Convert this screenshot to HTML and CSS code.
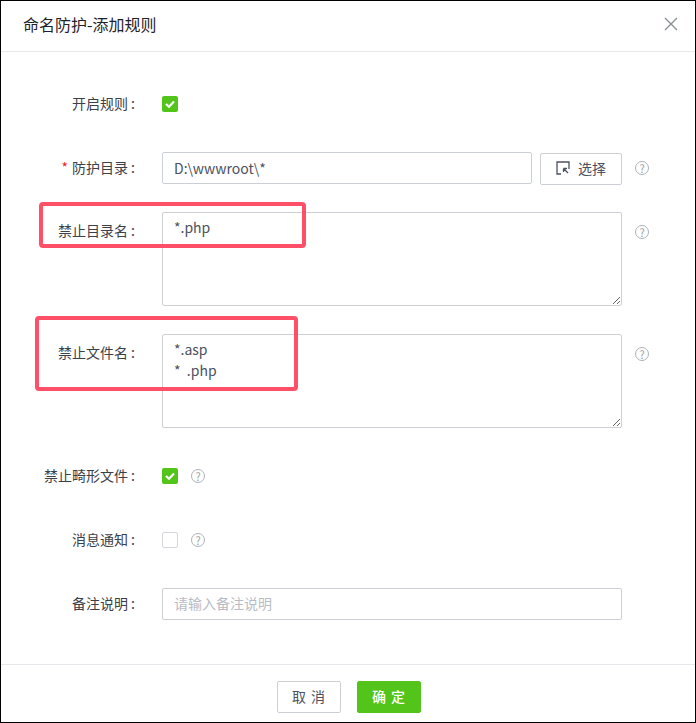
FILE: index.html
```html
<!DOCTYPE html>
<html lang="zh-CN">
<head>
  <meta charset="UTF-8">
  <title>命名防护-添加规则</title>
  <link rel="stylesheet" href="styles.css">
</head>
<body>
  <div class="dialog">
    <header class="dialog-header">
      <h1>命名防护-添加规则</h1>
      <svg class="close-icon" width="14" height="14" viewBox="0 0 14 14">
        <path d="M1 1L13 13M13 1L1 13" fill="none" stroke="#8a9099" stroke-width="1.4"/>
      </svg>
    </header>

    <form class="dialog-body">
      <div class="row">
        <label class="row-label">开启规则 :</label>
        <span class="check check-on">
          <svg width="16" height="16" viewBox="0 0 16 16"><path d="M4 8L7 10.8L12 5.6" fill="none" stroke="#fff" stroke-width="2.2"/></svg>
        </span>
      </div>

      <div class="row row-tight">
        <label class="row-label"><em class="required">*</em>防护目录 :</label>
        <input class="text-input path-input" type="text" value="D:\wwwroot\*">
        <button class="pick-btn" type="button">
          <svg width="14" height="14" viewBox="0 0 14 14">
            <path d="M5 13H1V1H13V8M7.5 7.5L12 12M7.5 7.5V11M7.5 7.5H11" fill="none" stroke="#4b5160" stroke-width="1.3"/>
          </svg>
          <span class="pick-text">选择</span>
        </button>
        <span class="help help-far">?</span>
      </div>

      <div class="row row-top row-tight">
        <label class="row-label">禁止目录名 :</label>
        <textarea class="text-area">*.php</textarea>
        <span class="help help-area">?</span>
      </div>

      <div class="row row-top">
        <label class="row-label">禁止文件名 :</label>
        <textarea class="text-area">*.asp
*  .php</textarea>
        <span class="help help-area">?</span>
      </div>

      <div class="row">
        <label class="row-label">禁止畸形文件 :</label>
        <span class="check check-on">
          <svg width="16" height="16" viewBox="0 0 16 16"><path d="M4 8L7 10.8L12 5.6" fill="none" stroke="#fff" stroke-width="2.2"/></svg>
        </span>
        <span class="help help-near">?</span>
      </div>

      <div class="row">
        <label class="row-label">消息通知 :</label>
        <span class="check"></span>
        <span class="help help-near">?</span>
      </div>

      <div class="row">
        <label class="row-label">备注说明 :</label>
        <input class="text-input note-input" type="text" placeholder="请输入备注说明">
      </div>
    </form>

    <footer class="dialog-footer">
      <button class="btn" type="button">取 消</button>
      <button class="btn btn-primary" type="button">确 定</button>
    </footer>

    <div class="mark mark-dir"></div>
    <div class="mark mark-file"></div>
  </div>
</body>
</html>
```

FILE: styles.css
```css
* {
  box-sizing: border-box;
}
body {
  margin: 0;
  padding: 0;
  background: #fff;
  color: #4b5160;
  font-family: "Noto Sans CJK SC", "Noto Sans", sans-serif;
  font-size: 14px;
}
.dialog {
  position: relative;
  display: flex;
  flex-direction: column;
  width: 696px;
  height: 723px;
  border: 1px solid #000;
  background: #fff;
}
.dialog-header {
  display: flex;
  align-items: center;
  justify-content: space-between;
  height: 51px;
  padding: 0 17px 4px 22px;
  border-bottom: 1px solid #e6e8eb;
}
.dialog-header h1 {
  margin: 0;
  font-size: 16px;
  font-weight: 400;
  color: #1f2329;
}
.dialog-body {
  flex: 1;
  padding-top: 36px;
}
.row {
  display: flex;
  align-items: center;
  min-height: 32px;
  margin-bottom: 32px;
}
.row-top {
  align-items: flex-start;
}
.row-tight {
  margin-bottom: 28px;
}
.row-label {
  width: 134px;
  margin-right: 27px;
  padding-bottom: 2px;
  text-align: right;
  white-space: nowrap;
  color: #3c4048;
}
.row-top .row-label {
  padding-top: 8px;
}
.required {
  margin-right: 4px;
  color: #f5222d;
  font-style: normal;
}
.check {
  display: block;
  width: 16px;
  height: 16px;
  border: 1px solid #d4d7dc;
  border-radius: 2px;
  background: #fff;
}
.check svg {
  display: block;
}
.check-on {
  border: none;
  background: #52c41a;
}
.text-input {
  width: 460px;
  height: 32px;
  padding: 0 11px;
  border: 1px solid #ccd0d6;
  border-radius: 2px;
  color: #4b5160;
  font: inherit;
  outline: none;
}
.text-input::placeholder {
  color: #b8bcc4;
}
.path-input {
  width: 370px;
}
.note-input {
  padding-bottom: 2px;
}
.text-area {
  display: block;
  width: 460px;
  height: 94px;
  padding: 4px 11px;
  border: 1px solid #ccd0d6;
  border-radius: 2px;
  color: #4b5160;
  font: inherit;
  line-height: 21px;
  outline: none;
}
.pick-btn {
  display: flex;
  align-items: center;
  justify-content: center;
  gap: 8px;
  width: 82px;
  height: 32px;
  margin: 1px 0 -1px 8px;
  padding: 0 0 2px;
  border: 1px solid #ccd0d6;
  border-radius: 2px;
  background: #fff;
  color: #4b5160;
  font: inherit;
}
.help {
  display: flex;
  align-items: center;
  justify-content: center;
  width: 14px;
  height: 14px;
  border: 1px solid #adb1b8;
  border-radius: 50%;
  color: #9a9ea6;
  font-size: 11px;
  line-height: 1;
}
.help-far {
  margin-left: 13px;
}
.help-area {
  margin: 13px 0 0 13px;
}
.help-near {
  margin-left: 13px;
}
.dialog-footer {
  display: flex;
  justify-content: center;
  gap: 16px;
  height: 58px;
  padding: 16px 0 0 2px;
  border-top: 1px solid #e6e8eb;
}
.btn {
  width: 64px;
  height: 32px;
  padding: 0 0 2px;
  border: 1px solid #ccd0d6;
  border-radius: 2px;
  background: #fff;
  color: #4b5160;
  font: inherit;
  letter-spacing: 1px;
}
.btn-primary {
  border-color: #52c41a;
  background: #52c41a;
  color: #fff;
  font-weight: 500;
}
/* red boxes drawn over the form */
.mark {
  position: absolute;
  border: 4px solid #ff5068;
  border-radius: 4px;
}
.mark-dir {
  left: 38px;
  top: 201px;
  width: 267px;
  height: 46px;
}
.mark-file {
  left: 34px;
  top: 315px;
  width: 263px;
  height: 75px;
}
```
